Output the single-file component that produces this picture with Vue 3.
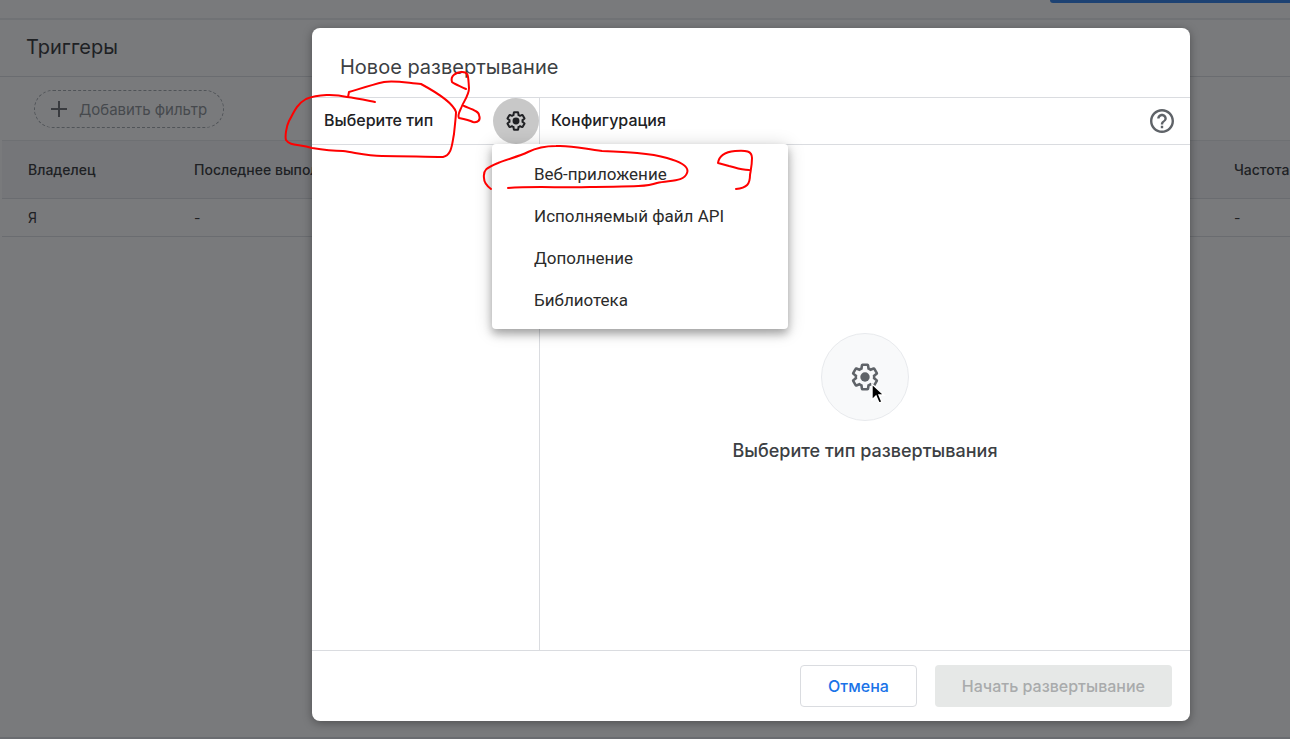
<script setup>
const gear =
  'M19.14 12.94c.04-.3.06-.61.06-.94 0-.32-.02-.64-.07-.94l2.03-1.58a.49.49 0 0 0 .12-.61l-1.92-3.32a.488.488 0 0 0-.59-.22l-2.39.96c-.5-.38-1.03-.7-1.62-.94l-.36-2.54a.484.484 0 0 0-.48-.41h-3.84c-.24 0-.43.17-.47.41l-.36 2.54c-.59.24-1.13.57-1.62.94l-2.39-.96c-.22-.08-.47 0-.59.22L2.74 8.87c-.12.21-.08.47.12.61l2.03 1.58c-.05.3-.09.63-.09.94s.02.64.07.94l-2.03 1.58a.49.49 0 0 0-.12.61l1.92 3.32c.12.22.37.29.59.22l2.39-.96c.5.38 1.03.7 1.62.94l.36 2.54c.05.24.24.41.48.41h3.84c.24 0 .44-.17.47-.41l.36-2.54c.59-.24 1.13-.56 1.62-.94l2.39.96c.22.08.47 0 .59-.22l1.92-3.32c.12-.22.07-.47-.12-.61l-2.01-1.58z'

const menuItems = ['Веб-приложение', 'Исполняемый файл API', 'Дополнение', 'Библиотека']

const strokes = [
  'M375 102C365 100 356 98 347 97C335 94 318 94 306 99C297 104 294 112 289 121C286 127 285 137 286 140C290 146 299 144 312 148C324 150 333 151 343 151C357 153 368 156 382 156C404 156 426 157 443 157C452 155 452 144 454 134C455 124 456 116 456 112C453 103 434 91 421 84C408 83 394 80 384 82C371 85 359 89 349 92L348 97',
  'M466 89C460 86 454 84 452 82C450 76 456 72 462 72C469 72 468 76 469 88C469 95 464 101 462 106C460 111 457 115 459 118C464 119 469 120 473 122C478 123 481 120 479 115C479 111 471 109 464 106',
  'M491 189C487 186 484 182 484 178C483 170 486 168 498 163C507 159 518 157 528 152C538 147 546 146 556 146C573 145 584 149 602 151C626 152 650 153 667 158C678 161 690 166 687 173C684 182 670 180 657 183C643 188 617 186 590 187C562 188 535 186 508 188',
  'M749 170C740 170 734 167 729 166L718 163C719 156 724 152 735 151C746 150 752 151 752 158C752 165 751 169 750 175C750 184 747 188 736 189',
]
</script>

<template>
  <div class="screen">
    <main class="page">
      <div class="topbar"><span class="banner"></span></div>
      <h1 class="page-title">Триггеры</h1>
      <div class="filters">
        <button type="button" class="filter">
          <svg width="18" height="18" viewBox="0 0 18 18" aria-hidden="true">
            <path d="M9 1v16M1 9h16" stroke="currentColor" stroke-width="2" />
          </svg>
          Добавить фильтр
        </button>
      </div>
      <table class="triggers">
        <thead>
          <tr>
            <th class="owner">Владелец</th>
            <th>Последнее выполнение</th>
            <th class="rate">Частота</th>
          </tr>
        </thead>
        <tbody>
          <tr>
            <td>Я</td>
            <td>-</td>
            <td>-</td>
          </tr>
        </tbody>
      </table>
    </main>

    <div class="scrim">
      <section class="dialog" role="dialog" aria-labelledby="dialog-title">
        <h2 id="dialog-title" class="dialog-title">Новое развертывание</h2>
        <div class="panes">
          <aside class="types">
            <header class="pane-head type-head">
              <h3>Выберите тип</h3>
              <div class="menu-anchor">
                <button type="button" class="gear-button" aria-label="Тип развертывания">
                  <svg width="20" height="20" viewBox="1 1 22 22" aria-hidden="true">
                    <path :d="gear" fill="none" stroke="currentColor" stroke-width="2.2" />
                    <circle cx="12" cy="12" r="3.8" fill="currentColor" />
                  </svg>
                </button>
                <div class="menu" role="menu">
                  <button v-for="item in menuItems" :key="item" type="button" role="menuitem">{{ item }}</button>
                </div>
              </div>
            </header>
          </aside>
          <div class="config">
            <header class="pane-head config-head">
              <h3>Конфигурация</h3>
              <button type="button" class="help" aria-label="Справка">
                <svg width="24" height="24" viewBox="2 2 20 20" aria-hidden="true">
                  <path
                    fill="currentColor"
                    d="M11 18h2v-2h-2v2zm1-16C6.48 2 2 6.48 2 12s4.48 10 10 10 10-4.48 10-10S17.52 2 12 2zm0 18c-4.41 0-8-3.59-8-8s3.59-8 8-8 8 3.59 8 8-3.59 8-8 8zm0-14c-2.21 0-4 1.79-4 4h2c0-1.1.9-2 2-2s2 .9 2 2c0 2-3 1.75-3 5h2c0-2.25 3-2.5 3-5 0-2.21-1.79-4-4-4z"
                  />
                </svg>
              </button>
            </header>
            <div class="empty">
              <div class="empty-icon">
                <svg width="28" height="28" viewBox="1 1 22 22" aria-hidden="true">
                  <path :d="gear" fill="none" stroke="currentColor" stroke-width="2" />
                  <circle cx="12" cy="12" r="3.7" fill="currentColor" />
                </svg>
                <svg class="cursor" width="17" height="24" viewBox="0 0 17 24" aria-hidden="true">
                  <path d="M2 2v16l4-4 3 7 3-1-3-7h5z" fill="#000" stroke="#fff" stroke-width="1.4" />
                </svg>
              </div>
              <p>Выберите тип развертывания</p>
            </div>
          </div>
        </div>
        <footer class="actions">
          <button type="button" class="cancel">Отмена</button>
          <button type="button" class="deploy" disabled>Начать развертывание</button>
        </footer>
      </section>
    </div>

    <svg class="ink" width="800" height="240" viewBox="0 0 800 240" aria-hidden="true">
      <path v-for="d in strokes" :key="d" :d="d" />
    </svg>
  </div>
</template>

<style>
body {
  margin: 0;
}
</style>

<style scoped>
* {
  box-sizing: border-box;
}
.screen {
  position: relative;
  min-height: 100vh;
  overflow: hidden;
  display: grid;
  font-family: Inter, "Open Sans", "Liberation Sans", sans-serif;
  color: #202124;
}
h1,
h2,
h3,
p {
  margin: 0;
  font-weight: 400;
}
button {
  font: inherit;
  margin: 0;
}
svg {
  display: block;
}
.page,
.scrim {
  grid-area: 1 / 1;
  min-width: 0;
}
.page {
  background: #fff;
  border-bottom: 2px solid #dadce0;
}
.topbar {
  height: 20px;
  border-bottom: 2px solid #e8eaed;
  display: flex;
  justify-content: flex-end;
  align-items: flex-start;
}
.banner {
  width: 240px;
  height: 3px;
  background: #1a73e8;
  border-bottom-left-radius: 4px;
}
.page-title {
  height: 57px;
  padding-left: 26px;
  font-size: 20px;
  line-height: 55px;
  border-bottom: 1px solid #dadce0;
}
.filters {
  height: 63px;
  padding: 13px 34px;
}
.filter {
  display: flex;
  align-items: center;
  gap: 11px;
  height: 38px;
  padding: 0 16px 0 15px;
  border: 1px dashed #9aa0a6;
  border-radius: 19px;
  background: none;
  color: #80868b;
  font-size: 15px;
}
.filter svg {
  color: #5f6368;
}
.triggers {
  width: calc(100% - 2px);
  margin-left: 2px;
  table-layout: fixed;
  border-collapse: collapse;
  text-align: left;
  white-space: nowrap;
}
.triggers th {
  height: 58px;
  padding: 0 0 0 26px;
  font-size: 14px;
  font-weight: 500;
  background: #f5f6f7;
  border-top: 1px solid #e4e6e9;
  border-bottom: 1px solid #dadce0;
}
.triggers td {
  height: 38px;
  padding: 0 0 0 26px;
  font-size: 14px;
  border-bottom: 1px solid #dadce0;
}
.owner {
  width: 166px;
}
.rate {
  width: 82px;
}
.scrim {
  z-index: 1;
  display: flex;
  padding: 28px 100px 18px 312px;
  background: rgba(32, 33, 36, 0.6);
}
.dialog {
  flex: 1;
  min-width: 0;
  display: flex;
  flex-direction: column;
  background: #fff;
  border-radius: 8px;
  box-shadow: 0 2px 10px rgba(0, 0, 0, 0.35);
}
.dialog-title {
  padding: 24px 28px 15px;
  font-size: 20px;
  line-height: 30px;
  color: #3c4043;
}
.panes {
  flex: 1;
  display: flex;
  border-top: 1px solid #dadce0;
  border-bottom: 1px solid #dadce0;
}
.types {
  width: 228px;
  border-right: 1px solid #dadce0;
}
.config {
  flex: 1;
  display: flex;
  flex-direction: column;
}
.pane-head {
  height: 47px;
  display: flex;
  align-items: center;
  justify-content: space-between;
  border-bottom: 1px solid #dadce0;
}
.pane-head h3 {
  padding-bottom: 2px;
  font-size: 16px;
  line-height: 20px;
  font-weight: 500;
}
.type-head {
  padding-left: 12px;
}
.config-head {
  padding: 0 16px 0 11px;
}
.menu-anchor {
  position: relative;
}
.gear-button {
  width: 46px;
  height: 46px;
  padding: 0;
  display: grid;
  place-items: center;
  border: 0;
  border-radius: 50%;
  background: #c8c8c8;
  color: #202124;
}
.menu {
  position: absolute;
  z-index: 2;
  top: 46px;
  left: -1px;
  width: 296px;
  padding: 9px 0 8px;
  display: flex;
  flex-direction: column;
  background: #fff;
  border-radius: 4px;
  box-shadow: 0 5px 8px rgba(0, 0, 0, 0.28), 0 2px 18px rgba(0, 0, 0, 0.18);
}
.menu button {
  height: 42px;
  padding: 0 42px;
  border: 0;
  background: none;
  color: #2b2b2b;
  font-family: Roboto, sans-serif;
  font-size: 17px;
  line-height: 42px;
  text-align: left;
}
.help {
  padding: 0;
  border: 0;
  background: none;
  color: #5f6368;
}
.empty {
  flex: 1;
  display: flex;
  flex-direction: column;
  align-items: center;
  justify-content: center;
  gap: 16px;
  padding-top: 2px;
}
.empty-icon {
  position: relative;
  width: 88px;
  height: 88px;
  display: grid;
  place-items: center;
  border: 1px solid #e8eaed;
  border-radius: 50%;
  background: #f8f9fa;
  color: #5f6368;
}
.cursor {
  position: absolute;
  left: 48px;
  top: 48px;
}
.empty p {
  font-size: 18px;
  line-height: 28px;
  font-weight: 500;
  color: #3c4043;
}
.actions {
  display: flex;
  justify-content: flex-end;
  gap: 18px;
  padding: 14px 18px;
}
.actions button {
  height: 42px;
  padding: 0 27px;
  border-radius: 4px;
  font-size: 16px;
  font-weight: 500;
}
.cancel {
  border: 1px solid #dadce0;
  background: #fff;
  color: #1a73e8;
}
.deploy {
  border: 0;
  background: #e6e8e7;
  color: #a9abac;
}
.ink {
  position: absolute;
  z-index: 3;
  left: 0;
  top: 0;
  pointer-events: none;
}
.ink path {
  fill: none;
  stroke: #f00;
  stroke-width: 2;
  stroke-linecap: round;
  stroke-linejoin: round;
}
</style>
